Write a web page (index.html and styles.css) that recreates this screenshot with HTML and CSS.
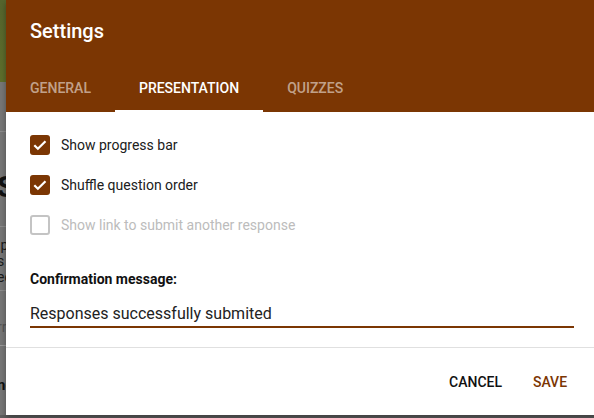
FILE: index.html
```html
<!DOCTYPE html>
<html lang="en">
<head>
<meta charset="utf-8">
<title>Settings</title>
<link rel="stylesheet" href="styles.css">
</head>
<body>
<div class="backdrop" aria-hidden="true">
  <div class="bd-top"></div>
  <div class="bd-space"></div>
  <div class="bd-card bd-title"><span class="bd-big">S</span></div>
  <div class="bd-card bd-lines">
    <p class="bd-line">ip</p>
    <p class="bd-line">s</p>
    <p class="bd-line">ec</p>
  </div>
  <div class="bd-card bd-muted"><span>rr</span></div>
  <div class="bd-card bd-last"><span>ne</span></div>
</div>

<div class="dialog">
  <header class="dlg-header">
    <h1 class="dlg-title">Settings</h1>
    <nav class="tabs">
      <span class="tab">GENERAL</span>
      <span class="tab tab-active">PRESENTATION</span>
      <span class="tab">QUIZZES</span>
    </nav>
  </header>
  <section class="dlg-body">
    <label class="row">
      <span class="box box-on"><svg viewBox="0 0 20 20" width="20" height="20"><path d="M4.3 10.2l3.6 3.6 7.6-7.6" fill="none" stroke="#fff" stroke-width="2.2"/></svg></span>
      <span class="row-label">Show progress bar</span>
    </label>
    <label class="row">
      <span class="box box-on"><svg viewBox="0 0 20 20" width="20" height="20"><path d="M4.3 10.2l3.6 3.6 7.6-7.6" fill="none" stroke="#fff" stroke-width="2.2"/></svg></span>
      <span class="row-label">Shuffle question order</span>
    </label>
    <label class="row row-disabled">
      <span class="box box-off"></span>
      <span class="row-label">Show link to submit another response</span>
    </label>
    <div class="field-label">Confirmation message:</div>
    <div class="field-input">Responses successfully submited</div>
  </section>
  <footer class="dlg-actions">
    <span class="btn">CANCEL</span>
    <span class="btn btn-primary">SAVE</span>
  </footer>
</div>
</body>
</html>
```
FILE: styles.css
```css
* { box-sizing: border-box; }
html, body { margin: 0; padding: 0; }
body {
  width: 594px;
  height: 418px;
  overflow: hidden;
  background: #5e5e5e;
  font-family: Roboto, "Noto Sans", "Liberation Sans", sans-serif;
  position: relative;
}

/* dimmed page behind the dialog */
.backdrop { width: 594px; margin-left: -3px; }
.bd-top { height: 82px; background: linear-gradient(180deg, #56652d, #5f6f2c); }
.bd-space { height: 49px; background: #777; }
.bd-card { background: #767676; border-top: 1px solid #8c8c8c; }
.bd-title { height: 95px; padding-top: 40px; }
.bd-big { font-size: 30px; font-weight: 700; color: #111; line-height: 30px; }
.bd-lines { height: 64px; padding-top: 10px; }
.bd-line { margin: 0; font-size: 14px; line-height: 16px; color: #1a1a1a; }
.bd-muted { height: 55px; padding-top: 28px; font-size: 14px; color: #555; }
.bd-last { height: 70px; padding-top: 30px; font-size: 15px; color: #111; font-weight: 700; border-top-color: #999; }

.dialog {
  position: absolute;
  left: 6px;
  top: 0;
  width: 592px;
  height: 415px;
  background: #fff;
  box-shadow: 0 3px 6px rgba(0, 0, 0, 0.35);
  display: flex;
  flex-direction: column;
}

.dlg-header {
  background: #7b3603;
  padding-top: 19px;
}
.dlg-title {
  margin: 0 0 21px 24px;
  font-size: 20px;
  line-height: 24px;
  font-weight: 500;
  color: #fff;
}
.tabs { display: flex; height: 48px; }
.tab {
  padding: 0 24px;
  line-height: 48px;
  font-size: 14px;
  font-weight: 500;
  color: rgba(255, 255, 255, 0.55);
}
.tab-active {
  color: #fff;
  box-shadow: inset 0 -2px 0 #fff;
}

.dlg-body { padding: 13px 24px 19px 24px; border-bottom: 1px solid #e0e0e0; }
.row { display: flex; align-items: center; height: 40px; gap: 11px; }
.box {
  width: 20px;
  height: 20px;
  border-radius: 3px;
  display: flex;
  flex: none;
}
.box-on { background: #7b3603; }
.box-off { border: 2px solid #c4c4c4; }
.row-label { font-size: 14px; color: #202020; }
.row-disabled .row-label { color: #bcbcbc; }

.field-label {
  margin-top: 26px;
  font-size: 14px;
  line-height: 16px;
  font-weight: 700;
  color: #111;
}
.field-input {
  margin-top: 17px;
  font-size: 16px;
  line-height: 20px;
  color: #222;
  padding-bottom: 2px;
  border-bottom: 2px solid #7b3603;
}

.dlg-actions {
  display: flex;
  justify-content: flex-end;
  align-items: center;
  gap: 8px;
  padding: 16px 16px 15px 0;
}
.btn {
  min-width: 64px;
  height: 36px;
  padding: 0 8px;
  line-height: 36px;
  text-align: center;
  font-size: 14px;
  font-weight: 500;
  color: #111;
}
.btn-primary { color: #7b3603; }
```
